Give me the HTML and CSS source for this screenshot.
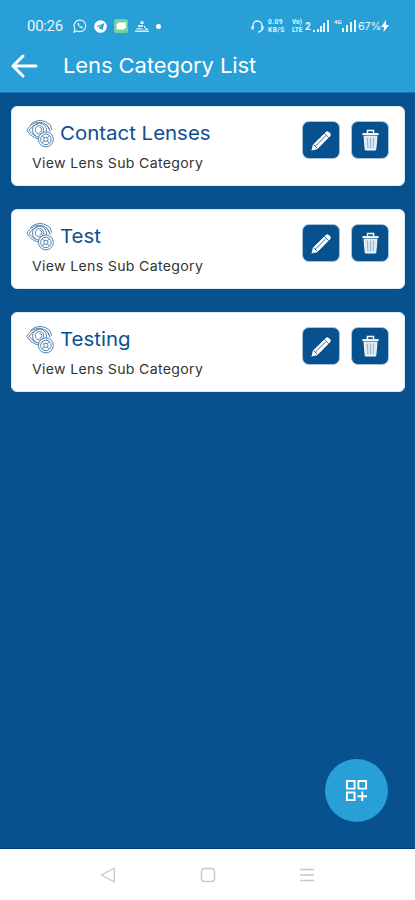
FILE: index.html
```html
<!DOCTYPE html>
<html lang="en">
<head>
<meta charset="utf-8">
<title>Lens Category List</title>
<link rel="stylesheet" href="styles.css">
</head>
<body>
<svg width="0" height="0" class="defs">
  <symbol id="lens" viewBox="0 0 30 30">
    <g fill="none" stroke="currentColor" stroke-width="1">
      <path d="M1 11.500C4 6 9 3 14 3s10 3 12 10M1 11.500C4 17 9 20.500 15 21M3.500 11.500C6 8 9 5.500 13 4.500M3.500 11.500c2 3 4 5 7 6.500"/>
      <path d="M4.500 6C10-.5 20-.5 26 6l1.500 5M21 5q3 2 4 6"/>
      <circle cx="14.500" cy="11.500" r="7.500"/><circle cx="14.500" cy="11" r="4.500"/><path d="M14.500 8.500a2.500 2.500 0 0 1 0 5"/>
      <circle cx="21.300" cy="21.300" r="8" fill="#fff"/><circle cx="21.300" cy="21.300" r="5.600"/><circle cx="21.300" cy="21.300" r="2.300"/>
      <path d="m17.500 17.500 2.200 2.200m3.200 3.200 2.200 2.200m0-7.600-2.200 2.200m-3.200 3.200-2.200 2.200"/>
    </g>
  </symbol>
  <symbol id="pencil" viewBox="0 0 24 24">
    <path fill="#fff" d="M1.500 22.500 3 16.500 16.500 3q1.500-1.500 3 0L21 4.500q1.500 1.500 0 3L7.500 21Z"/>
    <path d="m6 17.500 10.500-10.500M4 16.500l3.500 3.500M15 4.500 19.500 9" fill="none" stroke="#07518f" stroke-width=".9"/>
  </symbol>
  <symbol id="trash" viewBox="0 0 20 24">
    <path d="M6.800 4V1.500h6.400V4" fill="none" stroke="#fff" stroke-width="1.500"/>
    <path d="M1.500 5.300h17" stroke="#fff" stroke-width="2.200"/>
    <path d="M3.200 7.500h13.600L15.500 22h-11Z" fill="#dce8f2" stroke="#fff"/>
    <path d="m6.800 9 .5 11M10 9v11m3.200-11-.5 11" stroke="#8fb0cf" stroke-width="1"/>
  </symbol>
</svg>
<header class="header">
  <div class="status">
    <span class="time">00:26</span>
    <div class="notices">
      <svg width="14" height="14" viewBox="0 0 14 14" fill="none" stroke="#e6f6fc" stroke-width="1.200"><path d="m1 13 .9-3.200A5.800 5.800 0 1 1 4.200 12Z"/><path d="M4.600 4.200c-.5 2.200 2.800 5.400 5 5l.3-1.300-1.700-.8-.8.7-1.600-1.600.7-.8-.8-1.600Z" fill="#e6f6fc" stroke="none"/></svg>
      <svg width="13" height="13" viewBox="0 0 13 13"><circle cx="6.500" cy="6.500" r="6.300" fill="#fff"/><path d="m2.500 6.300 7.600-3-1.300 6.900-2.300-1.600-1.200 1.200-.3-2.300 3.200-2.900-4 2.400Z" fill="#28a0d7"/></svg>
      <svg width="14" height="14" viewBox="0 0 14 14"><rect width="14" height="14" rx="2" fill="#72d3a0"/><path d="M4.500 3.500H12v5l-2 2H2.500v-5Z" fill="#fff"/></svg>
      <svg width="14" height="13" viewBox="0 0 14 13" fill="#d2edf8"><path d="M6 1h2l1 3H5zM3 5h5v2H3zM9 5l2 3H9zM2 8h3l5 1.500H1zM10 8.500h3V10h-3zM0 10.500h14V12H0z"/></svg>
      <i class="dot"></i>
    </div>
    <div class="system">
      <svg width="13" height="13" viewBox="0 0 13 13" fill="none" stroke="#e6f6fc" stroke-width="1.300"><path d="M2 9V5.500a4.500 4.500 0 0 1 9 0V9q0 2.500-4 3"/><path d="M1.500 6v3.500M11.500 6v3.500" stroke-width="2"/></svg>
      <div class="stack speed"><span>0.09</span><span>KB/S</span></div>
      <div class="stack volte"><span>Vo)</span><span>LTE</span></div>
      <span class="sim">2</span>
      <svg class="signal" width="16" height="13" viewBox="0 0 16 13" fill="#e6f6fc"><path d="M0 10h2v2H0zM4 9h2v3H4zM7 6h2v6H7zM10 3h2v9h-2zM14 0h2v12h-2z"/></svg>
      <span class="net">4G</span>
      <svg width="14" height="13" viewBox="0 0 14 13" fill="#e6f6fc"><path d="M0 8h2v4H0zM4 5h2v7H4zM8 2h2v10H8zM12 0h2v12h-2z"/></svg>
      <span class="battery">67%</span>
      <svg width="8" height="12" viewBox="0 0 8 12" fill="#fff"><path d="M5 0 0 7h3L2.500 12 8 5H5Z"/></svg>
    </div>
  </div>
  <div class="toolbar">
    <svg class="back" width="27" height="24" viewBox="0 0 27 24" fill="none" stroke="#fff" stroke-width="3" stroke-linecap="round" stroke-linejoin="round"><path d="M25 12H2M12 2 2 12l10 10"/></svg>
    <h1 class="title">Lens Category List</h1>
  </div>
</header>
<main class="content">
  <article class="card">
    <div class="info">
      <div class="heading"><svg class="lens"><use href="#lens"/></svg><h2 class="name">Contact Lenses</h2></div>
      <p class="sub">View Lens Sub Category</p>
    </div>
    <div class="actions"><button class="action" aria-label="Edit"><svg width="23" height="23"><use href="#pencil"/></svg></button><button class="action" aria-label="Delete"><svg width="19" height="23"><use href="#trash"/></svg></button></div>
  </article>
  <article class="card">
    <div class="info">
      <div class="heading"><svg class="lens"><use href="#lens"/></svg><h2 class="name">Test</h2></div>
      <p class="sub">View Lens Sub Category</p>
    </div>
    <div class="actions"><button class="action" aria-label="Edit"><svg width="23" height="23"><use href="#pencil"/></svg></button><button class="action" aria-label="Delete"><svg width="19" height="23"><use href="#trash"/></svg></button></div>
  </article>
  <article class="card">
    <div class="info">
      <div class="heading"><svg class="lens"><use href="#lens"/></svg><h2 class="name">Testing</h2></div>
      <p class="sub">View Lens Sub Category</p>
    </div>
    <div class="actions"><button class="action" aria-label="Edit"><svg width="23" height="23"><use href="#pencil"/></svg></button><button class="action" aria-label="Delete"><svg width="19" height="23"><use href="#trash"/></svg></button></div>
  </article>
  <button class="fab" aria-label="Add category"><svg width="23" height="23" viewBox="0 0 24 24" fill="none" stroke="#fff" stroke-width="2"><path d="M2 2h8v8H2zM14 2h8v8h-8zM2 14h8v8H2zM18 13v10M13 18h10"/></svg></button>
</main>
<nav class="nav">
  <svg width="16" height="18" viewBox="0 0 16 18"><path d="M14.300 2v14L1.500 9Z"/></svg>
  <svg width="16" height="18" viewBox="0 0 16 18"><rect x="1.500" y="2.500" width="13" height="13" rx="3"/></svg>
  <svg width="16" height="18" viewBox="0 0 16 18"><path d="M1 3.500h14M1 9h14M1 14.500h14"/></svg>
</nav>
</body>
</html>
```
FILE: styles.css
```css
* { box-sizing: border-box; }
body {
  margin: 0;
  height: 900px;
  display: flex;
  flex-direction: column;
  overflow: hidden;
  font-family: Inter, "Open Sans", sans-serif;
  background: #07518f;
}
h1, h2, p { margin: 0; font-weight: 400; white-space: nowrap; transform-origin: left center; }
svg { display: block; flex: none; }
button { border: 0; padding: 0; }
.defs { position: absolute; }
.header { height: 93px; flex: none; background: #28a0d7; border-bottom: 1px solid #1978b4; }
.status { height: 52px; display: flex; align-items: center; padding: 0 26px 0 27px; color: #e6f6fc; }
.time { width: 46px; font: 15px/18px Roboto, sans-serif; letter-spacing: -.3px; }
.notices { display: flex; align-items: center; gap: 7px; }
.dot { width: 5px; height: 5px; border-radius: 50%; background: #fff; }
.system { display: flex; align-items: center; margin-left: auto; }
.stack { display: flex; flex-direction: column; justify-content: center; font: 700 6.500px/8px Roboto, sans-serif; }
.speed { margin-left: 4px; width: 20px; letter-spacing: .5px; }
.volte { margin-left: 4px; width: 13px; }
.sim { width: 8px; font: 700 10px/11px Roboto, sans-serif; }
.signal { margin-right: 5px; }
.net { align-self: flex-start; width: 8px; font: 700 6px/7px Roboto, sans-serif; }
.battery { font: 11px/13px Inter, sans-serif; margin-left: 2px; width: 23px; letter-spacing: -.3px; }
.toolbar { height: 28px; display: flex; align-items: center; padding-left: 11px; }
.title { margin-left: 25px; color: #fff; font-size: 20.500px; line-height: 28px; letter-spacing: -.1px; transform: scaleX(1.075); }
.content { flex: 1; display: flex; flex-direction: column; gap: 23px; padding: 13px 10px 0 11px; border-bottom: 1px solid #003f7d; }
.card { height: 80px; display: flex; justify-content: space-between; padding: 11px 15px 11px 14px; border-radius: 6px; background: #fff; border: 1px solid #e0eaf4; }
.heading { display: flex; align-items: center; height: 30px; color: #0b4f91; }
.lens { width: 28px; height: 29px; color: #487ba8; }
.name { margin-left: 6px; font-size: 19px; letter-spacing: 0; transform: scaleX(1.075); }
.sub { margin: 7px 0 0 6px; color: #333; font-size: 13px; line-height: 16px; letter-spacing: .3px; transform: scaleX(1.085); }
.actions { display: flex; gap: 11px; padding-top: 3px; }
.action { width: 38px; height: 38px; display: grid; place-items: center; border-radius: 7px; background: #07518f; border: 1px solid #a8c2da; }
.fab { width: 63px; height: 63px; margin: auto 17px 26px auto; display: grid; place-items: center; border-radius: 50%; background: #28a0d7; }
.nav { height: 51px; flex: none; display: flex; justify-content: space-between; align-items: center; padding: 1px 100px 0; background: #fff; }
.nav svg { fill: none; stroke: #c8c8c8; stroke-width: 1.400; stroke-linejoin: round; }
```
